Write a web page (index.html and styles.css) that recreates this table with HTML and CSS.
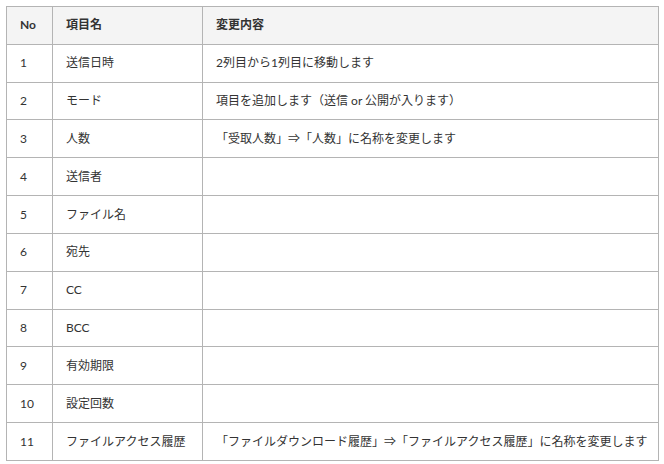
FILE: index.html
```
<!DOCTYPE html>
<html lang="ja">
<head>
<meta charset="utf-8">
<link rel="stylesheet" href="styles.css">
</head>
<body>
<div class="spec" role="table">
  <div class="cell head">No</div><div class="cell head">項目名</div><div class="cell head">変更内容</div>
  <div class="cell">1</div><div class="cell">送信日時</div><div class="cell">2列目から1列目に移動します</div>
  <div class="cell">2</div><div class="cell">モード</div><div class="cell">項目を追加します（送信 or 公開が入ります）</div>
  <div class="cell">3</div><div class="cell">人数</div><div class="cell">「受取人数」⇒「人数」に名称を変更します</div>
  <div class="cell">4</div><div class="cell">送信者</div><div class="cell"></div>
  <div class="cell">5</div><div class="cell">ファイル名</div><div class="cell"></div>
  <div class="cell">6</div><div class="cell">宛先</div><div class="cell"></div>
  <div class="cell">7</div><div class="cell">CC</div><div class="cell"></div>
  <div class="cell">8</div><div class="cell">BCC</div><div class="cell"></div>
  <div class="cell">9</div><div class="cell">有効期限</div><div class="cell"></div>
  <div class="cell">10</div><div class="cell">設定回数</div><div class="cell"></div>
  <div class="cell">11</div><div class="cell">ファイルアクセス履歴</div><div class="cell">「ファイルダウンロード履歴」⇒「ファイルアクセス履歴」に名称を変更します</div>
</div>
</body>
</html>
```
FILE: styles.css
```
html, body {
  margin: 0;
  padding: 0;
  background: #ffffff;
}
body {
  padding: 6px 0 0 6px;
  font-family: "Lato", "Noto Sans CJK JP", sans-serif;
  font-size: 12px;
  color: #333333;
}
.spec {
  display: grid;
  grid-template-columns: 46px 150px 456px;
  grid-auto-rows: 37.83px;
  width: max-content;
  border-left: 1px solid #b4b4b4;
  border-top: 1px solid #b4b4b4;
}
.cell {
  box-sizing: border-box;
  display: flex;
  align-items: center;
  padding-left: 13px;
  border-right: 1px solid #b4b4b4;
  border-bottom: 1px solid #b4b4b4;
  white-space: nowrap;
  line-height: 1;
}
.head {
  background: #f4f4f4;
  font-weight: bold;
}
```
